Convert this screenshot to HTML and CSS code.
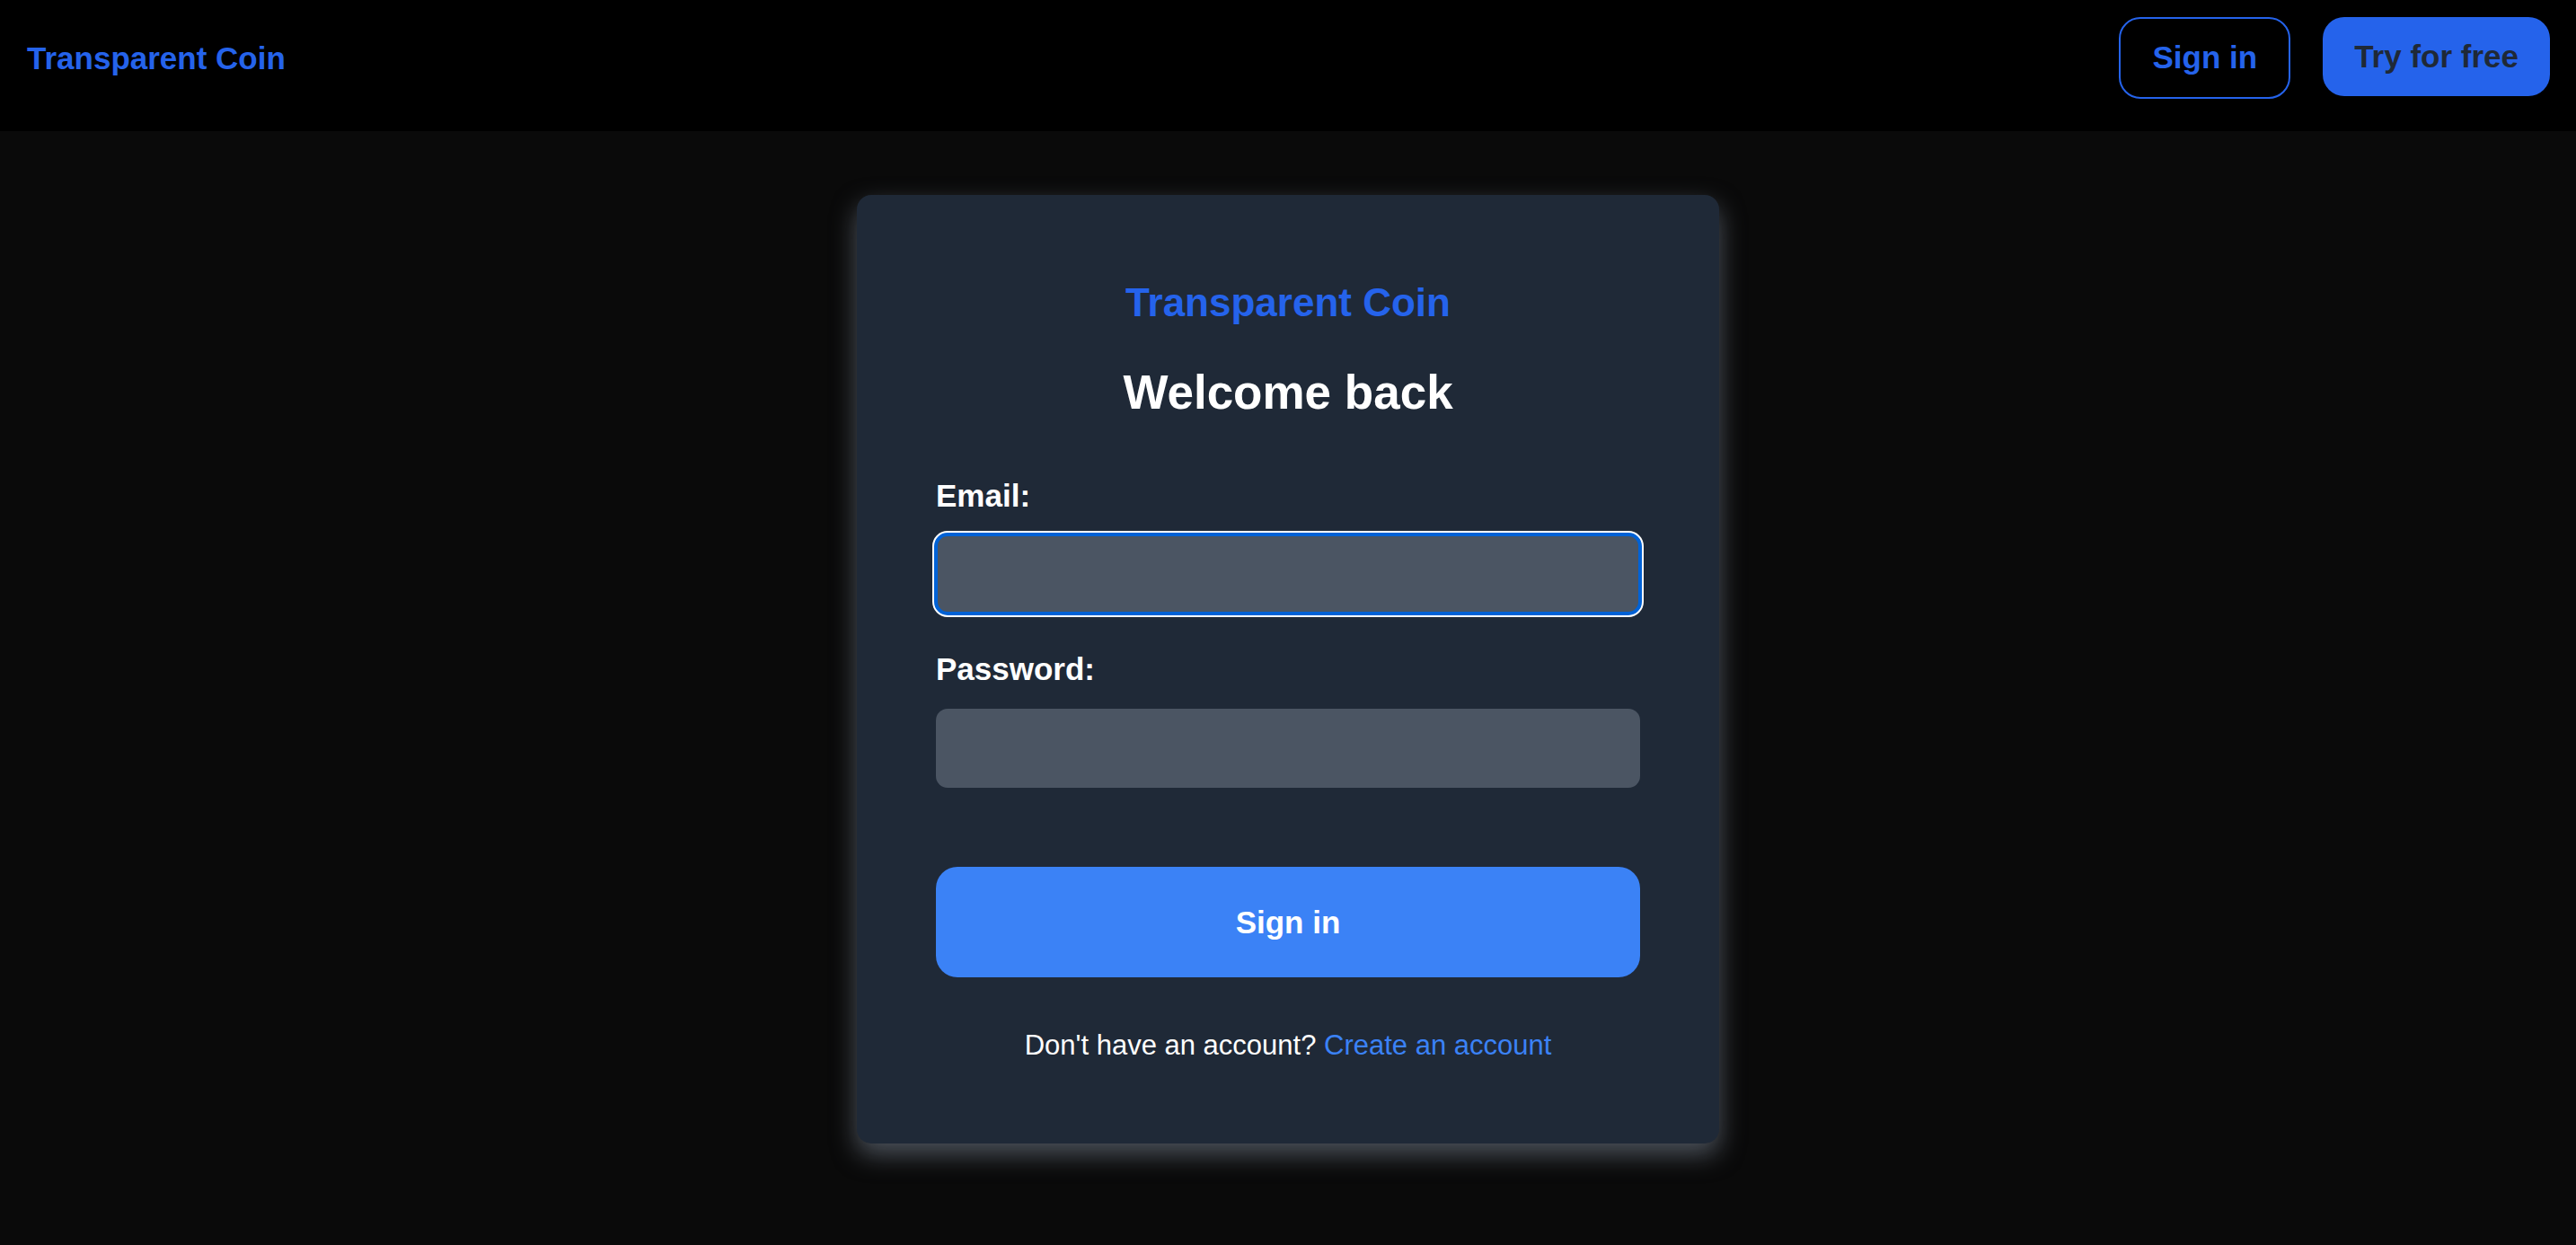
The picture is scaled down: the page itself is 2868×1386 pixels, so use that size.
FILE: index.html
```html
<!DOCTYPE html>
<html lang="en">
<head>
<meta charset="utf-8">
<title>Transparent Coin - Sign in</title>
<link rel="stylesheet" href="styles.css">
</head>
<body>
<header class="nav">
  <a class="nav-logo" href="#">Transparent Coin</a>
  <div class="nav-actions">
    <a class="btn-outline" href="#">Sign in</a>
    <a class="btn-solid" href="#">Try for free</a>
  </div>
</header>
<main class="page">
  <section class="card">
    <div class="card-brand">Transparent Coin</div>
    <h1 class="card-title">Welcome back</h1>
    <form class="form">
      <label class="label" for="email">Email:</label>
      <input class="input input-focus" id="email" type="email">
      <label class="label label-pw" for="password">Password:</label>
      <input class="input" id="password" type="password">
      <button class="submit" type="button">Sign in</button>
    </form>
    <p class="footer-text">Don't have an account? <a class="link" href="#">Create an account</a></p>
  </section>
</main>
</body>
</html>
```
FILE: styles.css
```css
html, body {
  margin: 0;
  padding: 0;
}
body {
  background: #0a0a0a;
  font-family: "Liberation Sans", Arial, Helvetica, sans-serif;
  color: #fff;
  min-height: 1386px;
}
a { text-decoration: none; }

.nav {
  background: #000;
  height: 146px;
  box-sizing: border-box;
  padding: 19px 29px 36px 30px;
  display: flex;
  align-items: center;
  justify-content: space-between;
}
.nav-logo {
  color: #2563eb;
  font-weight: 700;
  font-size: 35px;
  line-height: 40px;
}
.nav-actions {
  display: flex;
  align-items: flex-start;
  gap: 36px;
}
.btn-outline,
.btn-solid {
  font-weight: 700;
  font-size: 35px;
  line-height: 40px;
  padding: 24px 35px;
  border-radius: 24px;
}
.btn-outline {
  color: #2563eb;
  border: 2px solid #2563eb;
  padding: 23px 35px 24px;
}
.btn-solid {
  background: #2563eb;
  color: #1f2937;
}

.page {
  display: flex;
  justify-content: center;
  padding-top: 71px;
}
.card {
  width: 960px;
  box-sizing: border-box;
  background: #1f2937;
  border-radius: 16px;
  padding: 94px 88px 92px;
  box-shadow: 0 12px 28px rgba(120, 130, 145, 0.6);
  display: flex;
  flex-direction: column;
}
.card-brand {
  color: #2563eb;
  font-weight: 700;
  font-size: 44px;
  line-height: 51px;
  text-align: center;
  margin-bottom: 45px;
}
.card-title {
  margin: 0 0 65px;
  font-size: 53px;
  line-height: 60px;
  font-weight: 700;
  text-align: center;
  color: #fff;
}
.form {
  display: flex;
  flex-direction: column;
}
.label {
  font-size: 35px;
  line-height: 39px;
  font-weight: 700;
  color: #fff;
  margin-bottom: 24px;
}
.label-pw {
  margin-top: 42px;
  margin-bottom: 25px;
}
.input {
  display: block;
  width: 100%;
  height: 88px;
  box-sizing: border-box;
  border: none;
  border-radius: 13px;
  background: #4b5563;
  color: #fff;
  font-size: 30px;
  padding: 0 24px;
  outline: none;
}
.input-focus {
  outline: 4px solid #0062d6;
  outline-offset: -2px;
  box-shadow: 0 0 0 4px #ffffff;
}
.submit {
  margin-top: 88px;
  height: 123px;
  border: none;
  border-radius: 24px;
  background: #3b82f6;
  color: #fff;
  font-family: inherit;
  font-size: 35px;
  font-weight: 700;
  cursor: pointer;
}
.footer-text {
  margin: 58px 0 0;
  text-align: center;
  font-size: 31px;
  line-height: 35px;
  color: #fff;
}
.link {
  color: #3b82f6;
}
```
